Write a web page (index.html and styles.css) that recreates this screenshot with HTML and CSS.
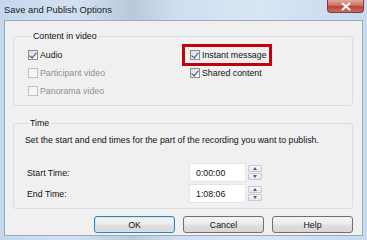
FILE: index.html
```html
<!DOCTYPE html>
<html lang="en">
<head>
    <meta charset="UTF-8">
    <title>Save and Publish Options</title>
    <link rel="stylesheet" href="styles.css">
</head>
<body>
<div class="window">
    <div class="titlebar">
        <span class="title">Save and Publish Options</span>
        <span class="close">
            <svg width="12" height="9" viewBox="0 0 12 9"><path d="M2 1 L10 8 M10 1 L2 8" stroke="#fff" stroke-width="2.2"/></svg>
        </span>
    </div>

    <div class="client">
        <fieldset class="group">
            <legend>Content in video</legend>
            <div class="options">
                <label class="opt"><span class="box checked"></span>Audio</label>
                <label class="opt right highlight"><span class="box checked"></span>Instant message</label>
                <label class="opt disabled"><span class="box"></span>Participant video</label>
                <label class="opt right"><span class="box checked"></span>Shared content</label>
                <label class="opt disabled"><span class="box"></span>Panorama video</label>
            </div>
        </fieldset>

        <fieldset class="group time_group">
            <legend>Time</legend>
            <p class="hint">Set the start and end times for the part of the recording you want to publish.</p>
            <div class="time_rows">
                <span class="time_label">Start Time:</span>
                <div class="spin_field">
                    <span class="time_input">0:00:00</span>
                    <span class="spinner"><span class="spin up"></span><span class="spin down"></span></span>
                </div>
                <span class="time_label">End Time:</span>
                <div class="spin_field">
                    <span class="time_input">1:08:06</span>
                    <span class="spinner"><span class="spin up"></span><span class="spin down"></span></span>
                </div>
            </div>
        </fieldset>

        <div class="buttons">
            <button class="btn default">OK</button>
            <button class="btn">Cancel</button>
            <button class="btn">Help</button>
        </div>
    </div>
</div>
</body>
</html>
```

FILE: styles.css
```css
body{
    margin: 0;
    width: 367px;
    height: 240px;
    overflow: hidden;
    font-family: "Liberation Sans", Arial, sans-serif;
}
.window{
    width: 367px;
    height: 240px;
    box-sizing: border-box;
    padding: 0 4px 4px 4px;
    display: flex;
    flex-direction: column;
    background: linear-gradient(90deg, #c4d7ed 0%, #d3e2f2 20%, #b9c9da 36%, #cfdff0 48%, #d8e6f4 70%, #c6d9ee 100%);
}
.titlebar{
    height: 20px;
    display: flex;
    align-items: flex-start;
    justify-content: space-between;
}
.title{
    margin-top: 4px;
    font-size: 9.4px;
    line-height: 12px;
    color: #1a1a1a;
}
.close{
    width: 37px;
    height: 13px;
    margin-right: -1px;
    box-sizing: border-box;
    display: flex;
    align-items: center;
    justify-content: center;
    border: 1px solid #8a3a30;
    border-top: none;
    border-radius: 0 0 4px 4px;
    background: linear-gradient(#e3a99f, #cd7063 45%, #b9463a 55%, #cc6c5c);
}

.client{
    flex: 1;
    box-sizing: border-box;
    border: 1px solid #9aa9ba;
    background: #f0f0f0;
    padding: 0 9px 0 8px;
    font-size: 8.8px;
    color: #111;
}
.group{
    margin: 9px 0 0 0;
    padding: 5px 0 6px 14px;
    border: 1px solid #d8dde2;
    border-radius: 3px;
}
.group legend{
    margin-left: 3px;
    padding: 0 2px;
    line-height: 12px;
}
.options{
    display: grid;
    grid-template-columns: 157px auto;
    grid-auto-rows: 16px;
    row-gap: 2px;
}
.opt{
    display: flex;
    align-items: center;
    gap: 2px;
    justify-self: start;
}
.opt.right{
    padding: 0 2px 0 5px;
}
.opt.highlight{
    outline: 3px solid #c4000d;
}
.opt.disabled{
    color: #8f8f8f;
}
.box{
    width: 10px;
    height: 10px;
    box-sizing: border-box;
    border: 1px solid #8e8f8f;
    background: linear-gradient(135deg, #dcdcdc, #fafafa);
    position: relative;
}
.disabled .box{
    border-color: #c2c2c2;
    background: #f5f5f5;
}
.box.checked::after{
    content: "";
    position: absolute;
    left: 2px;
    top: 0;
    width: 3px;
    height: 6px;
    border: solid #2f449c;
    border-width: 0 1.5px 1.5px 0;
    transform: rotate(40deg);
}

.time_group{
    margin-top: 11px;
    padding: 5px 0 5px 11px;
}
.hint{
    margin: 0;
    line-height: 12px;
}
.time_rows{
    margin-top: 17px;
    display: grid;
    grid-template-columns: 164px auto;
    grid-auto-rows: 19px;
    row-gap: 2px;
    align-items: center;
}
.time_label{
    padding-left: 2px;
}
.spin_field{
    display: flex;
    gap: 2px;
    height: 19px;
}
.time_input{
    width: 57px;
    box-sizing: border-box;
    padding-left: 6px;
    display: flex;
    align-items: center;
    background: #fff;
    border: 1px solid #e3e5ea;
}
.spinner{
    width: 14px;
    display: flex;
    flex-direction: column;
    justify-content: center;
    gap: 1px;
}
.spin{
    height: 7px;
    box-sizing: border-box;
    border: 1px solid #c3c8d0;
    border-radius: 1px;
    background: linear-gradient(#f8f8f8, #e4e6e9);
    position: relative;
}
.spin::after{
    content: "";
    position: absolute;
    left: 4px;
    top: 1px;
    border-left: 2.5px solid transparent;
    border-right: 2.5px solid transparent;
}
.spin.up::after{
    border-bottom: 3px solid #4d5f82;
}
.spin.down::after{
    border-top: 3px solid #4d5f82;
}

.buttons{
    margin-top: 7px;
    display: flex;
    justify-content: flex-end;
    gap: 8px;
}
.btn{
    width: 81px;
    height: 17px;
    padding: 0;
    font-family: inherit;
    font-size: 8.8px;
    color: #111;
    border: 1px solid #707070;
    border-radius: 3px;
    background: linear-gradient(#f4f4f4, #ececec 48%, #e0e0e0 52%, #d6d6d6);
}
.btn.default{
    border-color: #3c7fb1;
    box-shadow: inset 0 0 0 1px #c9e6f6;
}
```
